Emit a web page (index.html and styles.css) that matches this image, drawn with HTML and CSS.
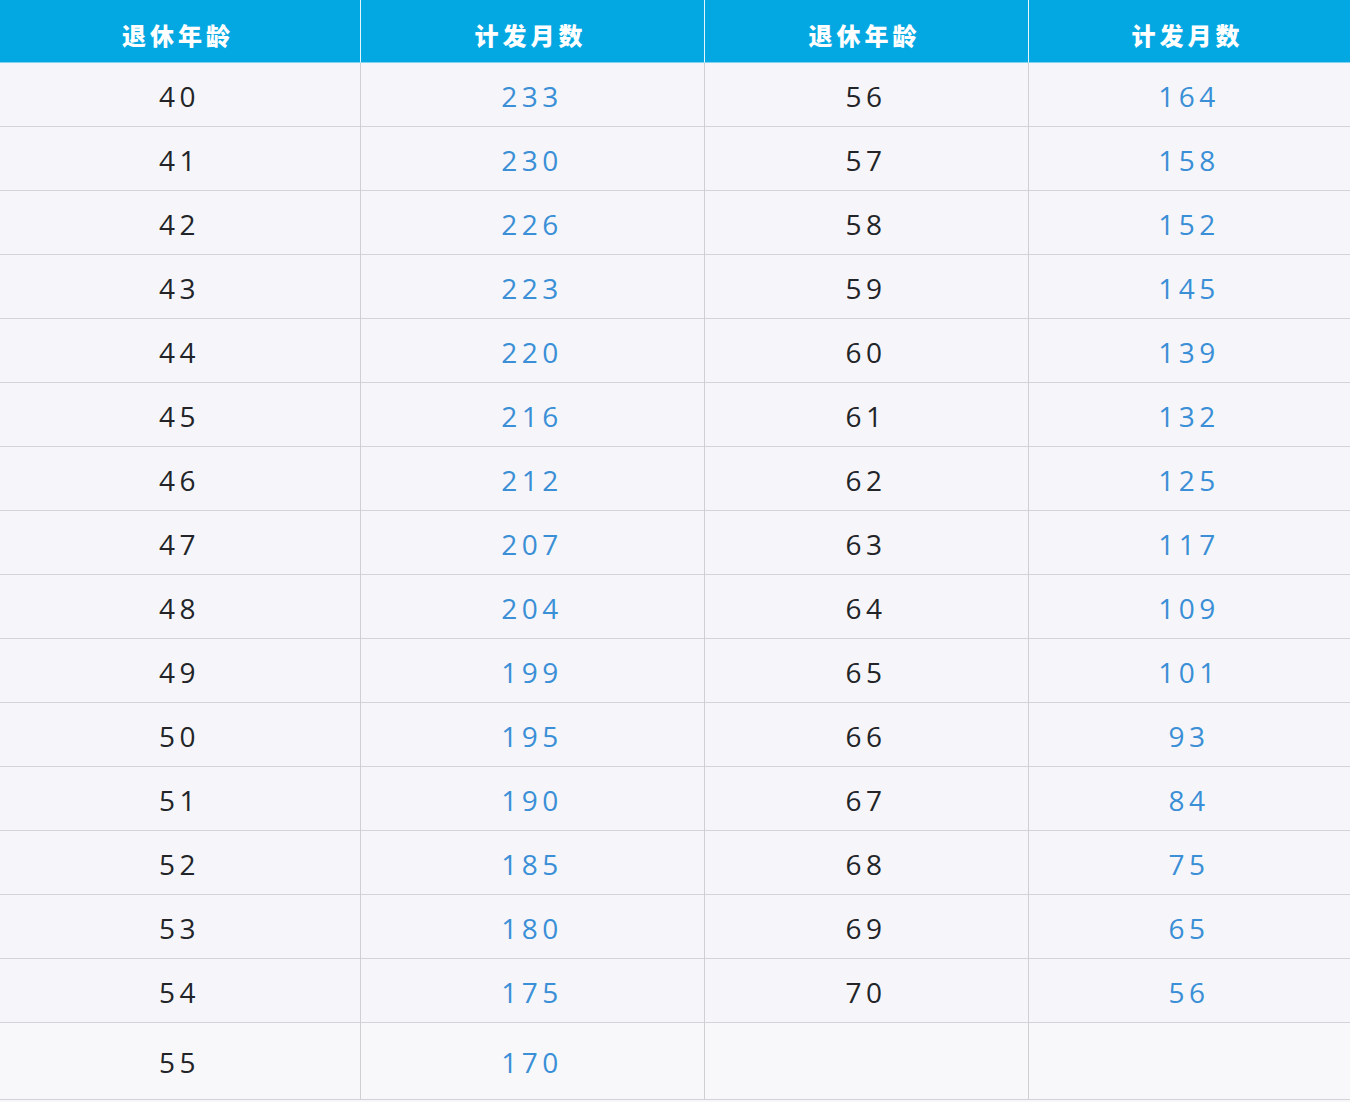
FILE: index.html
```html
<!DOCTYPE html>
<html lang="zh">
<head>
<meta charset="utf-8">
<link rel="stylesheet" href="styles.css">
</head>
<body>
<div class="table">
  <div class="cell head">退休年龄</div>
  <div class="cell head">计发月数</div>
  <div class="cell head">退休年龄</div>
  <div class="cell head last">计发月数</div>

  <div class="cell age">40</div><div class="cell num">233</div><div class="cell age">56</div><div class="cell num last">164</div>
  <div class="cell age">41</div><div class="cell num">230</div><div class="cell age">57</div><div class="cell num last">158</div>
  <div class="cell age">42</div><div class="cell num">226</div><div class="cell age">58</div><div class="cell num last">152</div>
  <div class="cell age">43</div><div class="cell num">223</div><div class="cell age">59</div><div class="cell num last">145</div>
  <div class="cell age">44</div><div class="cell num">220</div><div class="cell age">60</div><div class="cell num last">139</div>
  <div class="cell age">45</div><div class="cell num">216</div><div class="cell age">61</div><div class="cell num last">132</div>
  <div class="cell age">46</div><div class="cell num">212</div><div class="cell age">62</div><div class="cell num last">125</div>
  <div class="cell age">47</div><div class="cell num">207</div><div class="cell age">63</div><div class="cell num last">117</div>
  <div class="cell age">48</div><div class="cell num">204</div><div class="cell age">64</div><div class="cell num last">109</div>
  <div class="cell age">49</div><div class="cell num">199</div><div class="cell age">65</div><div class="cell num last">101</div>
  <div class="cell age">50</div><div class="cell num">195</div><div class="cell age">66</div><div class="cell num last">93</div>
  <div class="cell age">51</div><div class="cell num">190</div><div class="cell age">67</div><div class="cell num last">84</div>
  <div class="cell age">52</div><div class="cell num">185</div><div class="cell age">68</div><div class="cell num last">75</div>
  <div class="cell age">53</div><div class="cell num">180</div><div class="cell age">69</div><div class="cell num last">65</div>
  <div class="cell age">54</div><div class="cell num">175</div><div class="cell age">70</div><div class="cell num last">56</div>
  <div class="cell age tall">55</div><div class="cell num tall">170</div><div class="cell age tall"></div><div class="cell num tall last"></div>
</div>
</body>
</html>
```
FILE: styles.css
```css
html, body {
  margin: 0;
  padding: 0;
  background: #f7f7fa;
}
.table {
  display: grid;
  grid-template-columns: 361px 344px 324px 321px;
  width: 1350px;
}
.cell {
  box-sizing: border-box;
  height: 64px;
  display: flex;
  align-items: center;
  justify-content: center;
  border-right: 1px solid #cfcfd4;
  border-bottom: 1px solid #d4d4d8;
  background: #f6f6fa;
  font-family: "Open Sans", "Noto Sans", sans-serif;
  font-size: 28px;
  letter-spacing: 4.5px;
  padding-right: 1px;
  padding-top: 2px;
}
.cell.last {
  border-right: none;
}
.head {
  height: 63px;
  background: #03a8e3;
  color: #ffffff;
  border-right: 1px solid #e6f6fd;
  border-bottom: 1px solid #7fd3f1;
  font-family: "Noto Sans CJK SC", sans-serif;
  font-weight: 900;
  font-size: 24px;
  letter-spacing: 4px;
  padding-top: 6px;
  padding-right: 4px;
}
.head.last {
  border-right: none;
}
.age {
  color: #222428;
}
.num {
  color: #3a8fd6;
}
.tall {
  height: 77px;
  background: #f8f8fb;
}
```
